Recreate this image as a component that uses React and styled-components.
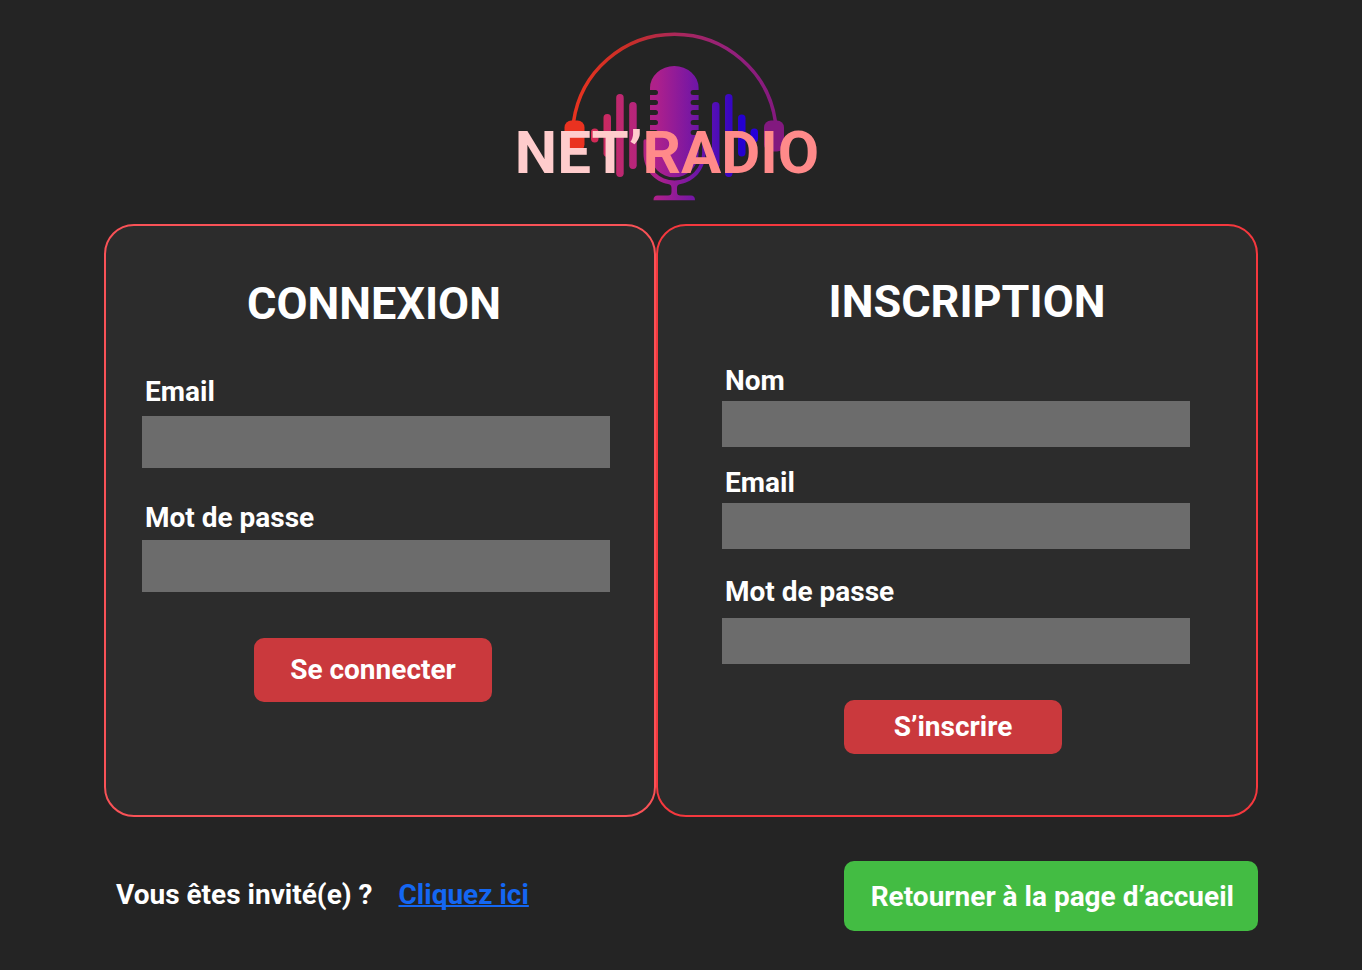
import React from "react";
import styled, { createGlobalStyle } from "styled-components";

const GlobalStyle = createGlobalStyle`
  *, *::before, *::after { box-sizing: border-box; }
  body {
    margin: 0;
    background: #242424;
    color: #ffffff;
    font-family: Roboto, "Liberation Sans", sans-serif;
    font-size: 28px;
    font-weight: 700;
    line-height: 32px;
  }
`;

const Page = styled.div`
  padding: 24px 104px 38px;
`;

const Header = styled.header`
  display: grid;
  justify-items: center;
  align-items: start;
  height: 200px;
  padding-right: 28px;
`;

const LogoMark = styled.svg`
  grid-area: 1 / 1;
  margin-left: 14px;
`;

const Brand = styled.h1`
  grid-area: 1 / 1;
  z-index: 1;
  margin: 94px 0 0;
  font-size: 60px;
  font-weight: 700;
  line-height: 70px;
  color: #ffcccc;
`;

const BrandAccent = styled.span`
  color: #ff8a8a;
`;

const Panels = styled.main`
  display: grid;
  grid-template-columns: 552fr 602fr;
`;

const Panel = styled.form`
  min-width: 0;
  display: flex;
  flex-direction: column;
  padding: ${(p) => p.$padding};
  background: #2c2c2c;
  border: 2px solid ${(p) => p.$border};
  border-radius: 30px;
`;

const Title = styled.h2`
  margin: 0 0 ${(p) => p.$after}px;
  padding: ${(p) => p.$padding};
  font-size: 45px;
  font-weight: 700;
  line-height: 56px;
  text-align: center;
`;

const Field = styled.div`
  display: flex;
  flex-direction: column;
  gap: ${(p) => p.$gap}px;
  margin-bottom: ${(p) => p.$after}px;
`;

const Label = styled.label`
  padding-left: 3px;
`;

const Input = styled.input`
  width: 100%;
  height: ${(p) => p.$height}px;
  padding: 0 12px;
  border: 0;
  border-radius: 0;
  background: #6c6c6c;
  color: #ffffff;
  font: inherit;
`;

const Button = styled.button`
  align-self: center;
  margin-right: 6px;
  padding: ${(p) => p.$padding};
  border: 0;
  border-radius: 10px;
  background: #ca393d;
  color: #ffffff;
  font: inherit;
  cursor: pointer;
`;

const Footer = styled.footer`
  display: flex;
  align-items: center;
  justify-content: space-between;
  margin-top: 44px;
  padding-left: 12px;
`;

const Guest = styled.p`
  display: flex;
  gap: 26px;
  margin: 0 0 2px;
`;

const GuestLink = styled.a`
  color: #1467f2;
  text-decoration: underline;
  text-decoration-thickness: 2px;
  text-decoration-skip-ink: none;
`;

const HomeLink = styled.a`
  padding: 20px 24px 18px 27px;
  border-radius: 10px;
  background: #43bc43;
  color: #ffffff;
  text-decoration: none;
`;

function Logo() {
  return (
    <LogoMark width="224" height="180" viewBox="562 24 224 180" aria-hidden="true">
      <defs>
        <linearGradient id="band" gradientUnits="userSpaceOnUse" x1="573" y1="100" x2="776" y2="100">
          <stop offset="0" stopColor="#e8331f" />
          <stop offset="0.28" stopColor="#c82e28" />
          <stop offset="0.5" stopColor="#ab2858" />
          <stop offset="0.75" stopColor="#96217a" />
          <stop offset="1" stopColor="#84197f" />
        </linearGradient>
        <linearGradient id="sound" gradientUnits="userSpaceOnUse" x1="590" y1="100" x2="758" y2="100">
          <stop offset="0" stopColor="#d62a52" />
          <stop offset="0.18" stopColor="#bd2870" />
          <stop offset="0.4" stopColor="#ad208c" />
          <stop offset="0.65" stopColor="#6c15a8" />
          <stop offset="0.83" stopColor="#3a07c2" />
          <stop offset="0.9" stopColor="#2400cf" />
          <stop offset="1" stopColor="#2800dc" />
        </linearGradient>
      </defs>
      <path d="M573.500 122A102 102 0 0 1 775.500 122" fill="none" stroke="url(#band)" strokeWidth="3.500" />
      <rect x="564.500" y="120.500" width="20" height="31" rx="7" fill="#ea3220" />
      <rect x="764" y="120.500" width="20" height="31" rx="7" fill="#82197f" />
      <g fill="url(#sound)">
        <rect x="591" y="128.500" width="7.500" height="14" rx="3.700" />
        <rect x="603.500" y="114" width="7.500" height="43" rx="3.700" />
        <rect x="616.200" y="94" width="7.500" height="83" rx="3.700" />
        <rect x="629.200" y="102" width="7.500" height="67" rx="3.700" />
        <rect x="712" y="102" width="7.500" height="67" rx="3.700" />
        <rect x="725" y="94" width="7.500" height="83" rx="3.700" />
        <rect x="738" y="114.500" width="7.500" height="42" rx="3.700" />
        <rect x="750.500" y="128.500" width="7.500" height="14" rx="3.700" />
        <path d="M650 90V88a24.300 22 0 0 1 48.600 0V90h-5.500a2.500 2.500 0 0 0 0 5h5.500v5h-5.500a2.500 2.500 0 0 0 0 5h5.500v5h-5.500a2.500 2.500 0 0 0 0 5h5.500v5h-5.500a2.500 2.500 0 0 0 0 5h5.500v5h-5.500a2.500 2.500 0 0 0 0 5h5.500V153a24.300 24.300 0 0 1-48.600 0V135h5.500a2.500 2.500 0 0 0 0-5H650v-5h5.500a2.500 2.500 0 0 0 0-5H650v-5h5.500a2.500 2.500 0 0 0 0-5H650v-5h5.500a2.500 2.500 0 0 0 0-5H650v-5h5.500a2.500 2.500 0 0 0 0-5z" />
        <path d="M643.500 141a1.700 1.700 0 0 1 3.400 0V153a27.600 27.600 0 0 0 55.200 0V141a1.700 1.700 0 0 1 3.400 0V153c0 17-12 29-25 31-2.500.5-3.500 1.500-3.500 4v4c0 2.500 1 3.500 3.500 3.500H691c2.500 0 4 1.500 4 4.700H653.500c0-3.200 1.500-4.700 4-4.700H668c2.500 0 3.500-1 3.500-3.500v-4c0-2.500-1-3.500-3.500-4-13-2-24.500-14-24.500-31z" />
      </g>
    </LogoMark>
  );
}

function TextField({ id, label, type = "text", height, gap, after }) {
  return (
    <Field $gap={gap} $after={after}>
      <Label htmlFor={id}>{label}</Label>
      <Input id={id} name={id} type={type} $height={height} />
    </Field>
  );
}

export default function App() {
  return (
    <>
      <GlobalStyle />
      <Page>
        <Header>
          <Logo />
          <Brand>
            NET’<BrandAccent>RADIO</BrandAccent>
          </Brand>
        </Header>
        <Panels>
          <Panel $padding="50px 44px 0 36px" $border="#f95257">
            <Title $after={44} $padding="0 4px 0 0">CONNEXION</Title>
            <TextField id="login-email" label="Email" type="email" height={52} gap={8} after={34} />
            <TextField id="login-password" label="Mot de passe" type="password" height={52} gap={6} after={46} />
            <Button type="submit" $padding="16px 36px">Se connecter</Button>
          </Panel>
          <Panel $padding="48px 66px 61px 64px" $border="#f5383e">
            <Title $after={35} $padding="0 0 0 22px">INSCRIPTION</Title>
            <TextField id="signup-name" label="Nom" height={46} gap={4} after={20} />
            <TextField id="signup-email" label="Email" type="email" height={46} gap={4} after={27} />
            <TextField id="signup-password" label="Mot de passe" type="password" height={46} gap={10} after={36} />
            <Button type="submit" $padding="11px 50px">S’inscrire</Button>
          </Panel>
        </Panels>
        <Footer>
          <Guest>
            Vous êtes invité(e) ? <GuestLink href="#invite">Cliquez ici</GuestLink>
          </Guest>
          <HomeLink href="#accueil">Retourner à la page d’accueil</HomeLink>
        </Footer>
      </Page>
    </>
  );
}
